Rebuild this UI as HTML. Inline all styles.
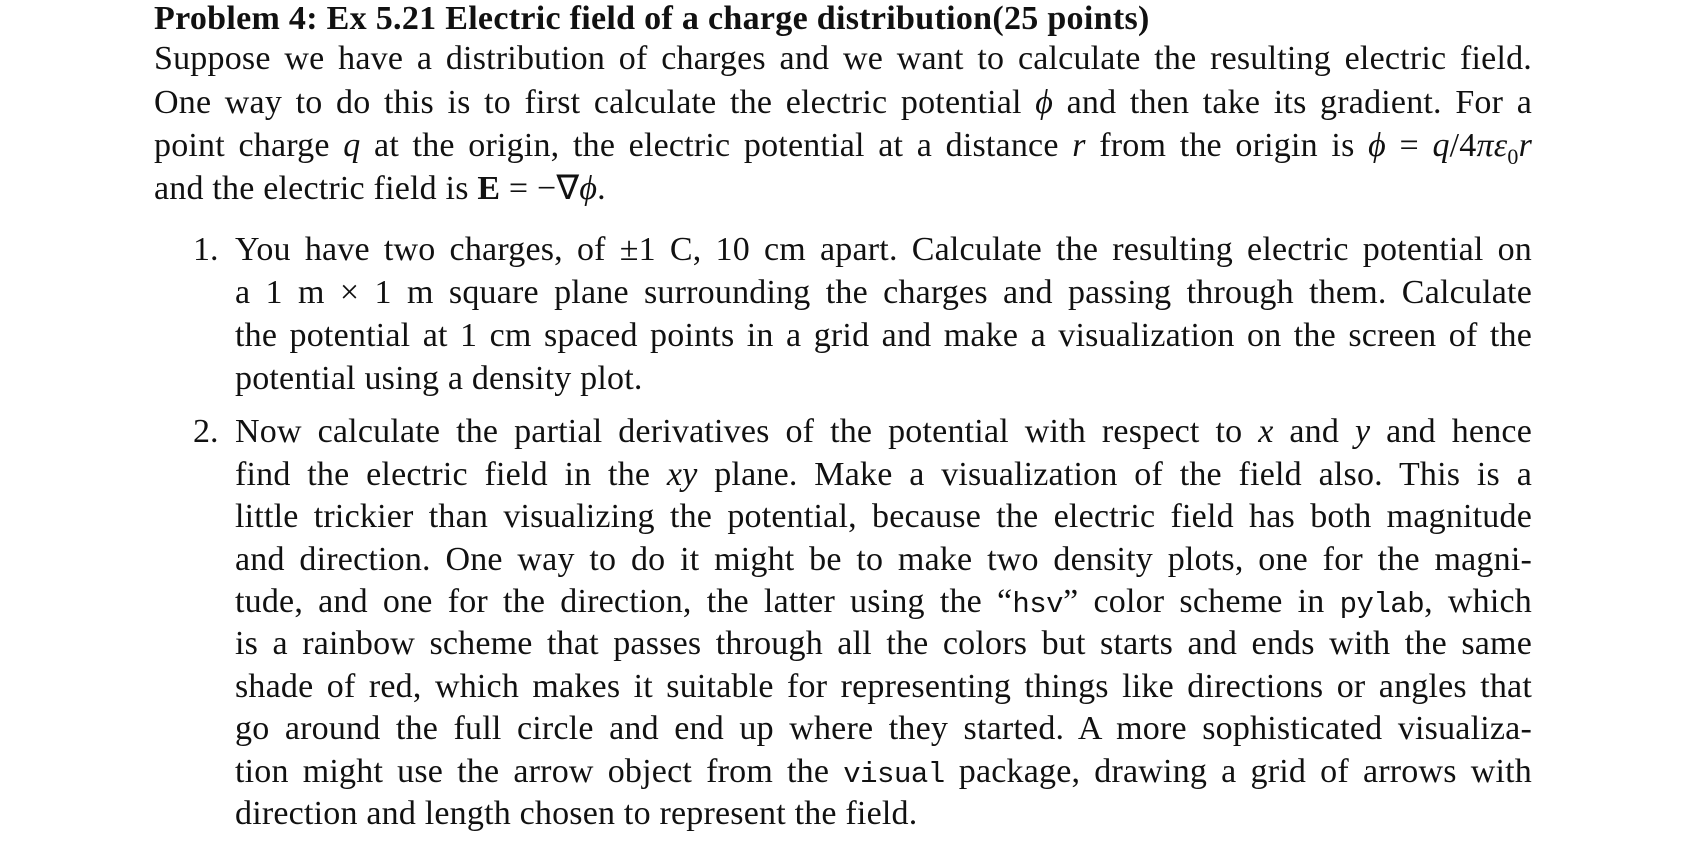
<!DOCTYPE html>
<html><head><meta charset="utf-8"><style>
body{margin:0;width:1700px;height:852px;background:#fff;position:relative;overflow:hidden;font-family:"Liberation Serif",serif;color:#111;}
.l{position:absolute;left:154px;width:1378px;font-size:34px;line-height:43px;height:43px;text-align:justify;text-align-last:justify;white-space:normal;overflow:hidden;letter-spacing:0.2px;}
.i{left:235px;width:1297px;}
.e{text-align-last:left;}
.n{position:absolute;left:193px;font-size:34px;line-height:43px;}
b{font-weight:bold;}
code{font-family:"Liberation Mono",monospace;font-size:29px;letter-spacing:-0.5px;}
</style></head><body>
<div class="l e" style="top:-3px;font-weight:bold;letter-spacing:0.3px">Problem 4: Ex 5.21 Electric field of a charge distribution(25 points)</div>
<div class="l" style="top:37px">Suppose we have a distribution of charges and we want to calculate the resulting electric field.</div>
<div class="l" style="top:81px">One way to do this is to first calculate the electric potential <i>ϕ</i> and then take its gradient. For a</div>
<div class="l" style="top:124px">point charge <i>q</i> at the origin, the electric potential at a distance <i>r</i> from the origin is <i>ϕ</i> = <i>q</i>/4<i>πε</i><sub style="font-size:22px">0</sub><i>r</i></div>
<div class="l e" style="top:167px">and the electric field is <b>E</b> = −∇<i>ϕ</i>.</div>

<div class="n" style="top:228px">1.</div>
<div class="l i" style="top:228px">You have two charges, of ±1 C, 10 cm apart. Calculate the resulting electric potential on</div>
<div class="l i" style="top:271px">a 1 m × 1 m square plane surrounding the charges and passing through them. Calculate</div>
<div class="l i" style="top:314px">the potential at 1 cm spaced points in a grid and make a visualization on the screen of the</div>
<div class="l i e" style="top:357px">potential using a density plot.</div>

<div class="n" style="top:410px">2.</div>
<div class="l i" style="top:410px">Now calculate the partial derivatives of the potential with respect to <i>x</i> and <i>y</i> and hence</div>
<div class="l i" style="top:453px">find the electric field in the <i>xy</i> plane. Make a visualization of the field also. This is a</div>
<div class="l i" style="top:495px">little trickier than visualizing the potential, because the electric field has both magnitude</div>
<div class="l i" style="top:538px">and direction. One way to do it might be to make two density plots, one for the magni-</div>
<div class="l i" style="top:580px">tude, and one for the direction, the latter using the “<code>hsv</code>” color scheme in <code>pylab</code>, which</div>
<div class="l i" style="top:622px">is a rainbow scheme that passes through all the colors but starts and ends with the same</div>
<div class="l i" style="top:665px">shade of red, which makes it suitable for representing things like directions or angles that</div>
<div class="l i" style="top:707px">go around the full circle and end up where they started. A more sophisticated visualiza-</div>
<div class="l i" style="top:750px">tion might use the arrow object from the <code>visual</code> package, drawing a grid of arrows with</div>
<div class="l i e" style="top:792px">direction and length chosen to represent the field.</div>
</body></html>
